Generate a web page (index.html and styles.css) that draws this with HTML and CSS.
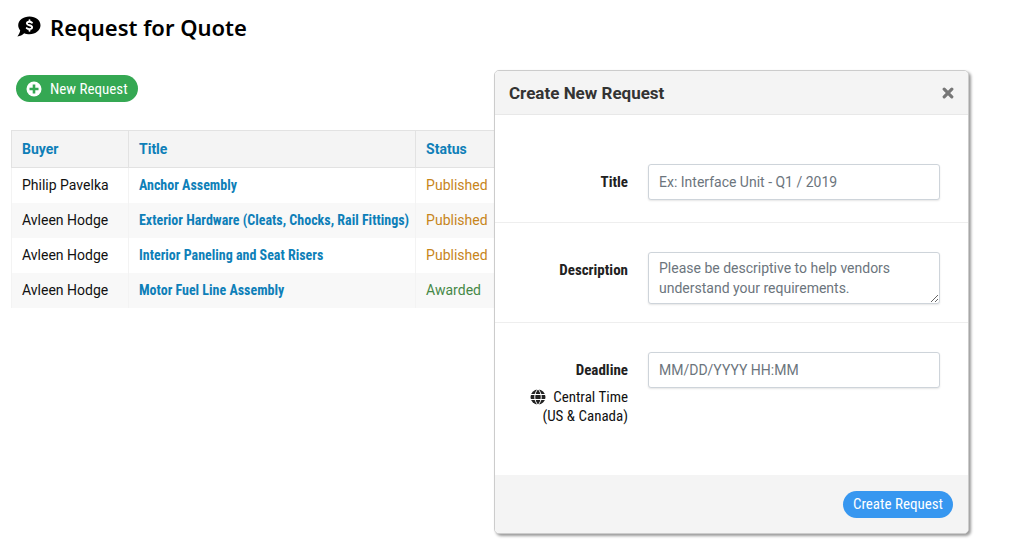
FILE: index.html
```
<!DOCTYPE html>
<html lang="en">
<head>
    <meta charset="UTF-8">
    <meta name="viewport" content="width=device-width, initial-scale=1.0">
    <title>Request for Quote</title>
    <link rel="stylesheet" href="styles.css">
</head>
<body>
    <main class="page">
        <h1 class="page-title">
            <svg class="title-icon" viewBox="0 0 24 22" aria-hidden="true">
                <path fill="#000" d="M12.5 0.500C18.800 0.500 23.500 4.400 23.500 9.300S18.800 18.200 12.500 18.200C10.600 18.200 8.700 17.900 7.200 17.200C5.400 18.900 3 20.200 0.400 20.400C1.800 18.700 2.900 16.700 3.200 14.600C2 13.100 1.200 11.300 1.200 9.300C1.200 4.400 6.200 0.500 12.500 0.500Z"/>
                <path fill="none" stroke="#fff" stroke-width="1.900" stroke-linecap="round" d="M15 6.700C14.300 6.100 13.300 5.800 12.300 5.800C10.900 5.800 9.900 6.400 9.900 7.500C9.900 9.800 15.100 8.600 15.100 11.300C15.100 12.500 14 13.100 12.500 13.100C11.400 13.100 10.400 12.800 9.700 12.100M12.500 4.100V5.800M12.500 13.100V14.800"/>
            </svg>
            Request for Quote
        </h1>
        <button type="button" class="btn btn-green">
            <svg class="btn-icon" viewBox="0 0 16 16" aria-hidden="true">
                <circle cx="8" cy="8" r="7.500" fill="#fff"/>
                <path d="M8 3.500V12.500M3.500 8H12.500" stroke="#35a853" stroke-width="2.600"/>
            </svg>
            New Request
        </button>
        <table class="requests">
            <thead>
                <tr>
                    <th class="col-buyer">Buyer</th>
                    <th class="col-title">Title</th>
                    <th class="col-status">Status</th>
                </tr>
            </thead>
            <tbody>
                <tr>
                    <td>Philip Pavelka</td>
                    <td><a href="#">Anchor Assembly</a></td>
                    <td class="published">Published</td>
                </tr>
                <tr>
                    <td>Avleen Hodge</td>
                    <td><a href="#">Exterior Hardware (Cleats, Chocks, Rail Fittings)</a></td>
                    <td class="published">Published</td>
                </tr>
                <tr>
                    <td>Avleen Hodge</td>
                    <td><a href="#">Interior Paneling and Seat Risers</a></td>
                    <td class="published">Published</td>
                </tr>
                <tr>
                    <td>Avleen Hodge</td>
                    <td><a href="#">Motor Fuel Line Assembly</a></td>
                    <td class="awarded">Awarded</td>
                </tr>
            </tbody>
        </table>
    </main>

    <form class="modal" role="dialog" aria-labelledby="modal-title">
        <header class="modal-header">
            <h2 id="modal-title">Create New Request</h2>
            <button type="button" class="close" aria-label="Close">
                <svg viewBox="0 0 12 12" aria-hidden="true">
                    <path d="M2.200 2.200L9.800 9.800M9.800 2.200L2.200 9.800" stroke="#777" stroke-width="3.200" stroke-linecap="round"/>
                </svg>
            </button>
        </header>
        <div class="modal-body">
            <div class="form-row">
                <label class="form-label" for="title">Title</label>
                <input class="field" type="text" id="title" placeholder="Ex: Interface Unit - Q1 / 2019">
            </div>
            <div class="form-row">
                <label class="form-label" for="description">Description</label>
                <textarea class="field" id="description" rows="2" placeholder="Please be descriptive to help vendors understand your requirements."></textarea>
            </div>
            <div class="form-row">
                <div class="label-group">
                    <label class="form-label" for="deadline">Deadline</label>
                    <p class="timezone">
                        <svg class="globe" viewBox="0 0 16 16" aria-hidden="true">
                            <circle cx="8" cy="8" r="7.500" fill="#212121"/>
                            <path fill="none" stroke="#fff" stroke-width="1" d="M0 5.500H16M0 10.500H16M8 0C3.700 4.500 3.700 11.500 8 16M8 0C12.300 4.500 12.300 11.500 8 16"/>
                        </svg>
                        Central Time<br>(US &amp; Canada)
                    </p>
                </div>
                <input class="field" type="text" id="deadline" placeholder="MM/DD/YYYY HH:MM">
            </div>
        </div>
        <footer class="modal-footer">
            <button type="submit" class="btn btn-blue">Create Request</button>
        </footer>
    </form>
</body>
</html>
```

FILE: styles.css
```
* {
    box-sizing: border-box;
}

body {
    margin: 0;
    background-color: #fff;
    color: #111;
    font-family: Roboto, Arial, sans-serif;
    font-size: 14px;
    line-height: 20px;
}

.page {
    padding: 11px;
}

.page-title {
    display: flex;
    align-items: center;
    gap: 9px;
    margin: 0 0 32px 6px;
    color: #000;
    font-family: "Noto Sans", "Open Sans", sans-serif;
    font-size: 22px;
    font-weight: 600;
    line-height: 32px;
}

.title-icon {
    width: 24px;
    height: 22px;
}

.btn {
    display: inline-flex;
    align-items: center;
    gap: 8px;
    height: 27px;
    padding: 0 10px;
    border: none;
    border-radius: 14px;
    color: #fff;
    font-family: "Roboto Condensed", Roboto, sans-serif;
    font-size: 15px;
    white-space: nowrap;
    cursor: pointer;
}

.btn-green {
    margin-left: 5px;
    background-color: #35a853;
}

.btn-blue {
    background-color: #3797f0;
}

.btn-icon {
    width: 16px;
    height: 16px;
}

/* Requests table */
.requests {
    margin-top: 28px;
    border-collapse: collapse;
}

.requests th,
.requests td {
    height: 35px;
    padding: 0 6px 0 10px;
    border-left: 1px solid #f3f3f3;
    text-align: left;
    white-space: nowrap;
}

.requests th {
    height: 37px;
    border: 1px solid #e2e2e2;
    background-color: #f4f4f4;
    color: #0e7fb8;
    font-weight: 700;
}

.requests tbody tr:nth-child(even) {
    background-color: #f8f8f8;
}

.requests a {
    color: #0e7fb8;
    font-family: "Roboto Condensed", Roboto, sans-serif;
    font-weight: 700;
    text-decoration: none;
}

.col-buyer {
    min-width: 117px;
}

.col-title {
    min-width: 287px;
}

.col-status {
    min-width: 117px;
}

.requests .published {
    color: #c7851b;
}

.requests .awarded {
    color: #468847;
}

/* Create request dialog */
.modal {
    position: absolute;
    top: 70px;
    right: 55px;
    width: 475px;
    max-width: 90%;
    border: 1px solid #ccc;
    border-radius: 5px;
    background-color: #fff;
    box-shadow: 2px 2px 3px rgba(0, 0, 0, 0.4);
    overflow: hidden;
}

.modal-header {
    display: flex;
    align-items: center;
    justify-content: space-between;
    height: 44px;
    padding: 0 14px;
    border-bottom: 1px solid #e8e8e8;
    background-color: #f4f4f4;
}

.modal-header h2 {
    margin: 0;
    color: #333;
    font-size: 17px;
    font-weight: 700;
}

.close {
    display: flex;
    padding: 0;
    border: none;
    background: none;
    cursor: pointer;
}

.close svg {
    width: 12px;
    height: 12px;
}

.modal-body {
    padding: 20px 0 31px;
}

.form-row {
    display: flex;
    align-items: flex-start;
    gap: 20px;
    padding: 29px 28px 18px 14px;
}

.form-row:first-child {
    padding-bottom: 22px;
}

.form-row + .form-row {
    border-top: 1px solid #eee;
}

.form-label,
.label-group {
    flex: 1;
    font-family: "Roboto Condensed", Roboto, sans-serif;
    font-size: 15px;
    text-align: right;
}

.form-label {
    padding-top: 8px;
    color: #212121;
    font-weight: 700;
}

.label-group .form-label {
    display: block;
}

.timezone {
    margin: 8px 0 0;
    line-height: 19px;
}

.globe {
    width: 16px;
    height: 16px;
    margin-right: 4px;
    vertical-align: -3px;
}

.field {
    width: 292px;
    height: 36px;
    padding: 5px 10px;
    border: 1px solid #ced4da;
    border-radius: 3px;
    background-color: #fff;
    box-shadow: 0 1px 2px rgba(0, 0, 0, 0.1);
    font-family: inherit;
    font-size: 14px;
    line-height: 20px;
}

textarea.field {
    height: 52px;
    resize: vertical;
}

.field::placeholder {
    color: #6c757d;
}

.modal-footer {
    display: flex;
    align-items: center;
    justify-content: flex-end;
    height: 58px;
    padding: 0 15px;
    background-color: #f4f4f4;
}
```
